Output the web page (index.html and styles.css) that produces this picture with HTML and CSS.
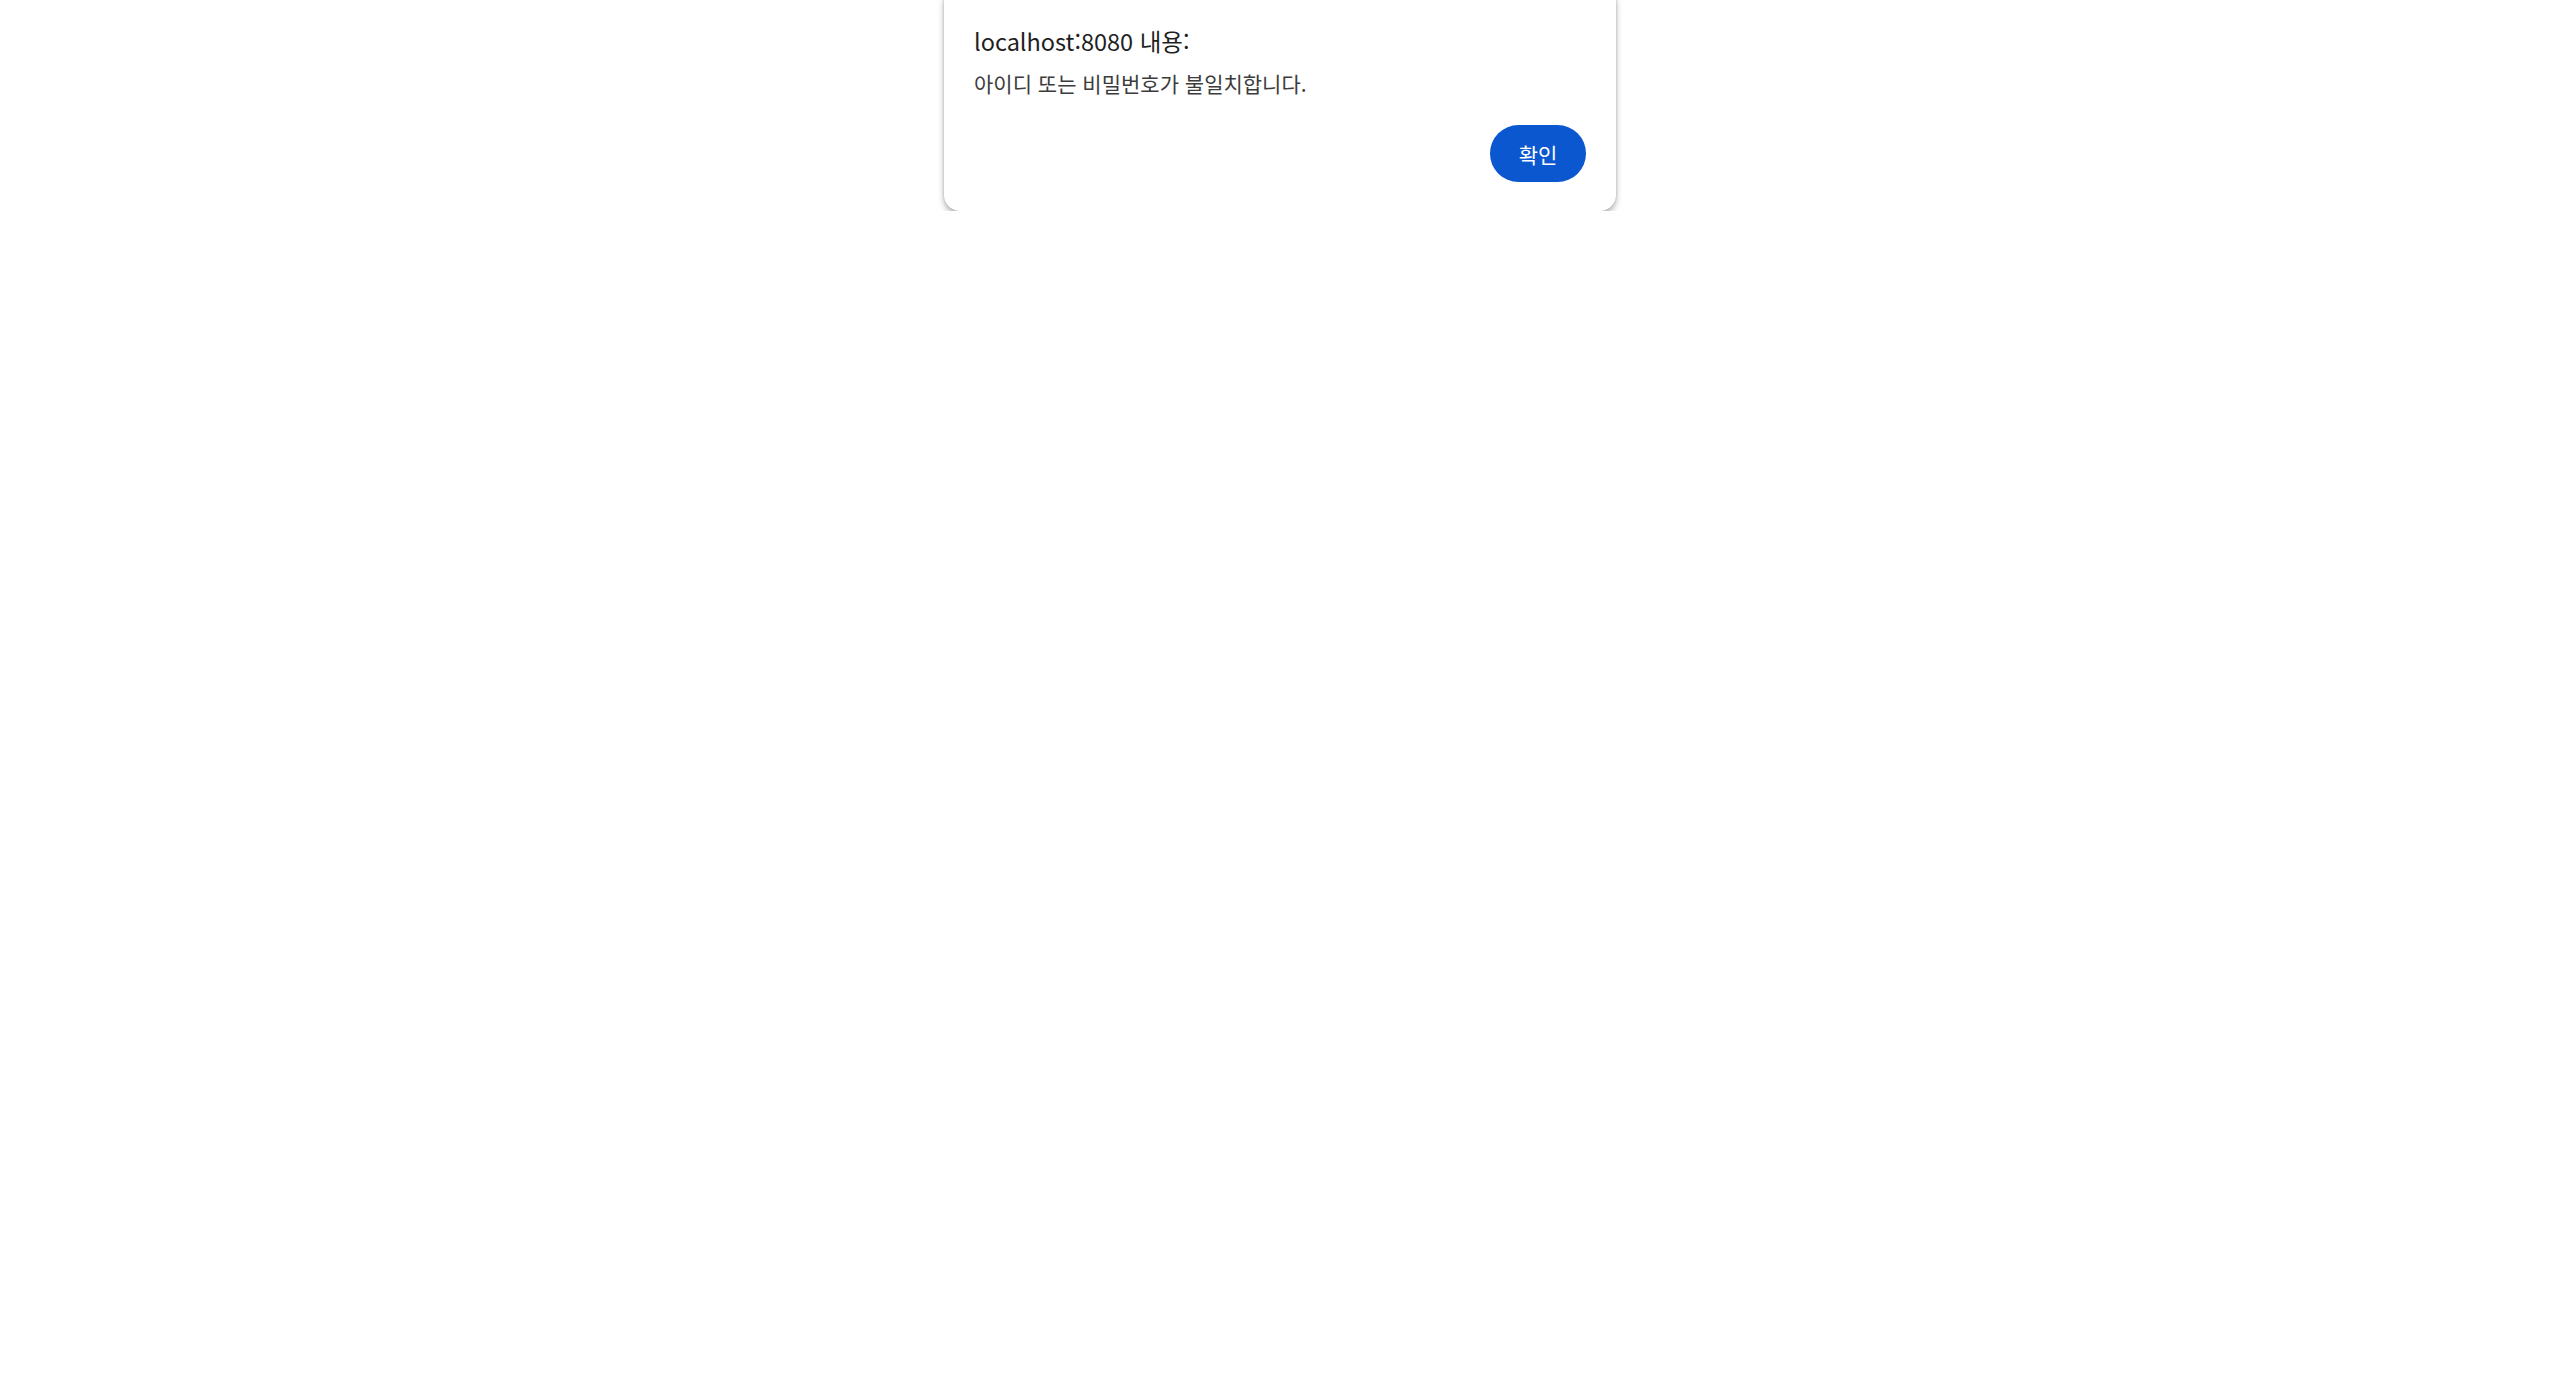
FILE: index.html
```html
<!DOCTYPE html>
<html lang="ko">
<head>
    <meta charset="UTF-8">
    <meta name="viewport" content="width=device-width, initial-scale=1.0">
    <title>localhost:8080</title>
    <link rel="stylesheet" href="styles.css">
</head>
<body>
    <div class="alert-layer">
        <div class="alert-dialog" role="alertdialog">
            <div class="alert-title">localhost:8080 내용:</div>
            <div class="alert-message">아이디 또는 비밀번호가 불일치합니다.</div>
            <div class="alert-actions">
                <button class="btn-ok">확인</button>
            </div>
        </div>
    </div>
</body>
</html>
```

FILE: styles.css
```css
html, body {
    margin: 0;
    padding: 0;
    background-color: #fff;
    font-family: "Noto Sans CJK KR", "Noto Sans", sans-serif;
}

.alert-layer {
    display: flex;
    justify-content: center;
}

.alert-dialog {
    width: 672px;
    box-sizing: border-box;
    margin-top: -14px;
    padding: 39px 30px 29px 30px;
    background-color: #fff;
    border-radius: 16px;
    box-shadow: 0 4px 6px rgba(0, 0, 0, 0.28), 0 0 3px rgba(0, 0, 0, 0.18);
}

.alert-title {
    font-size: 23.5px;
    line-height: 32px;
    color: #1f1f1f;
}

.alert-message {
    margin-top: 12px;
    font-size: 21px;
    line-height: 28px;
    color: #3c3c3c;
}

.alert-actions {
    display: flex;
    justify-content: flex-end;
    margin-top: 28px;
}

.btn-ok {
    height: 57px;
    width: 96px;
    padding: 0;
    border: none;
    border-radius: 29px;
    background-color: #0b57d0;
    color: #fff;
    font-family: inherit;
    font-size: 21px;
    cursor: pointer;
}
```
